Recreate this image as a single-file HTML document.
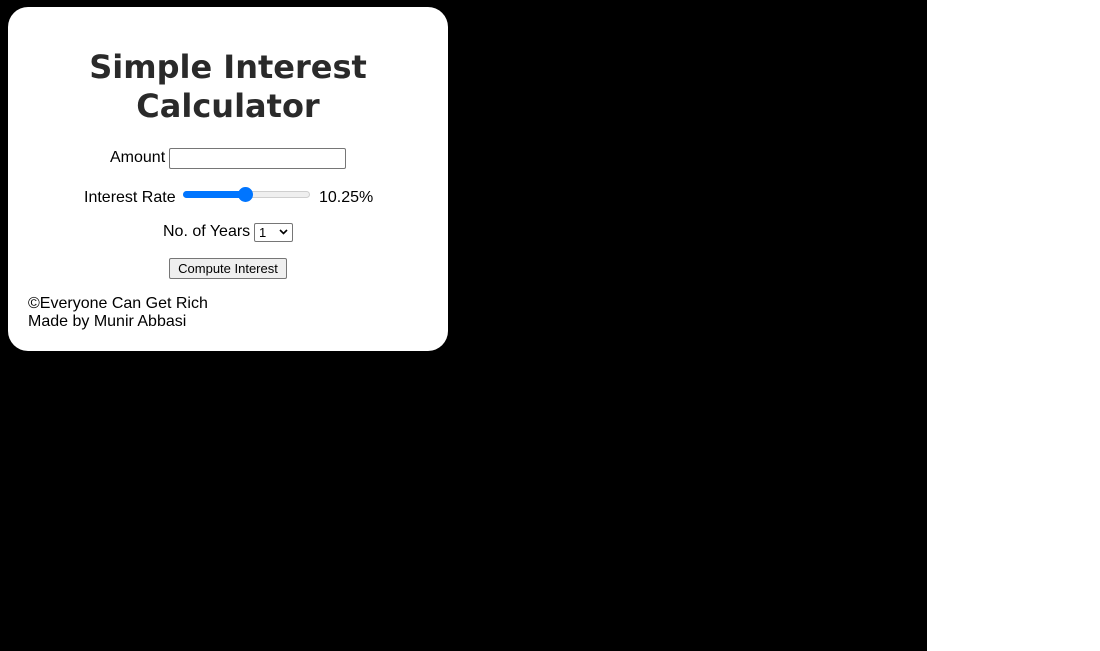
<!DOCTYPE html>
<html><head><style>
body{margin:0;width:1100px;height:651px;background:#fff;position:relative;overflow:hidden;font-family:"Liberation Sans",Arial,sans-serif;color:#000}
.bg{position:absolute;left:0;top:0;width:927px;height:651px;background:#000}
.card{position:absolute;left:8px;top:7px;width:440px;height:344px;background:#fff;border-radius:20px}
.t{position:absolute;font-size:16px;line-height:18px;white-space:nowrap}
h1{position:absolute;left:8px;top:48px;width:440px;margin:0;text-align:center;font-family:"DejaVu Sans",Verdana,sans-serif;font-weight:bold;font-size:32px;line-height:39px;color:#2a2a2a}
.box{position:absolute;border:1px solid #767676;background:#fff;box-sizing:border-box}
</style></head><body>
<div class="bg"></div>
<div class="card"></div>
<h1>Simple Interest<br>Calculator</h1>
<div class="t" style="left:110px;top:149px">Amount</div>
<div class="box" style="left:169px;top:148px;width:177px;height:21px;border-radius:2px"></div>
<div class="t" style="left:84px;top:189px">Interest Rate</div>
<div style="position:absolute;left:183px;top:191px;width:127px;height:7px;border-radius:4px;background:#efefef;border:1px solid #cfcfcf;box-sizing:border-box"></div>
<div style="position:absolute;left:183px;top:191px;width:62px;height:7px;border-radius:4px;background:#0075ff"></div>
<div style="position:absolute;left:238px;top:187px;width:15px;height:15px;border-radius:50%;background:#0075ff"></div>
<div class="t" style="left:319px;top:189px">10.25%</div>
<div class="t" style="left:163px;top:223px">No. of Years</div>
<div class="box" style="left:254px;top:223px;width:39px;height:19px;border-radius:2px;font-size:13px;line-height:17px;padding-left:4px">1
<svg style="position:absolute;right:4px;top:5px" width="9" height="6" viewBox="0 0 9 6"><path d="M1 1l3.5 3.5L8 1" stroke="#000" stroke-width="1.6" fill="none"/></svg></div>
<div class="box" style="left:169px;top:258px;width:118px;height:21px;background:#efefef;border-radius:2px;font-size:13px;line-height:19px;text-align:center">Compute Interest</div>
<div class="t" style="left:28px;top:295px">©Everyone Can Get Rich</div>
<div class="t" style="left:28px;top:313px">Made by Munir Abbasi</div>
</body></html>
